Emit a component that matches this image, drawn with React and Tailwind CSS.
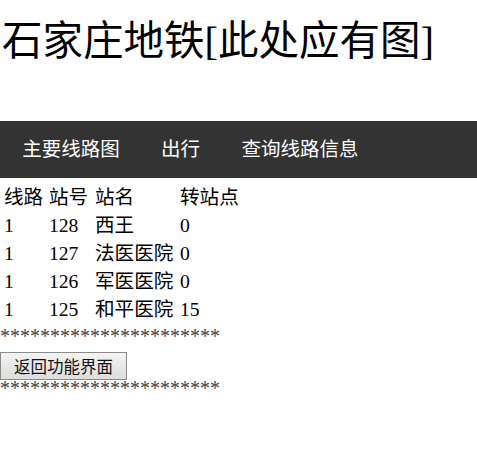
import React from 'react';

const rows = [
  ['1', '128', '西王', '0'],
  ['1', '127', '法医医院', '0'],
  ['1', '126', '军医医院', '0'],
  ['1', '125', '和平医院', '15'],
];

const stars = '*'.repeat(22);

export default function App() {
  return (
    <div className="min-h-[450px] bg-white text-black font-['Liberation_Serif','Noto_Sans_CJK_SC',serif]">
      {/* Title */}
      <h1 className="pt-[19px] pl-[2px] text-[40.5px] leading-[46px] font-normal">石家庄地铁[此处应有图]</h1>

      {/* Nav bar */}
      <ul className="mt-[56px] flex h-[57px] items-center bg-[#333333] pl-[1.5px] text-[19.5px] text-white">
        <li className="px-[20.7px]">主要线路图</li>
        <li className="px-[20.7px]">出行</li>
        <li className="px-[20.7px]">查询线路信息</li>
      </ul>

      {/* Station table */}
      <div className="flex flex-col pt-[6px] text-[19.6px] leading-[28px]">
        <div className="flex">
          <span className="w-[49px] pl-[4px]">线路</span>
          <span className="w-[46px]">站号</span>
          <span className="w-[85px]">站名</span>
          <span>转站点</span>
        </div>
        {rows.map((r, i) => (
          <div key={i} className="flex">
            <span className="w-[49px] pl-[4px]">{r[0]}</span>
            <span className="w-[46px]">{r[1]}</span>
            <span className="w-[85px]">{r[2]}</span>
            <span>{r[3]}</span>
          </div>
        ))}
      </div>

      <div className="pt-[2px] text-[20px] leading-[20px] text-[#444]">{stars}</div>

      <button className="mt-[6px] h-[28px] w-[127px] border border-[#8a8a8a] bg-gradient-to-b from-[#f4f4f4] to-[#dcdcdc] text-[16.5px] leading-none text-[#111] font-['Noto_Sans_CJK_SC',sans-serif]">
        返回功能界面
      </button>

      <div className="text-[20px] leading-[16px] text-[#444]">{stars}</div>
    </div>
  );
}
